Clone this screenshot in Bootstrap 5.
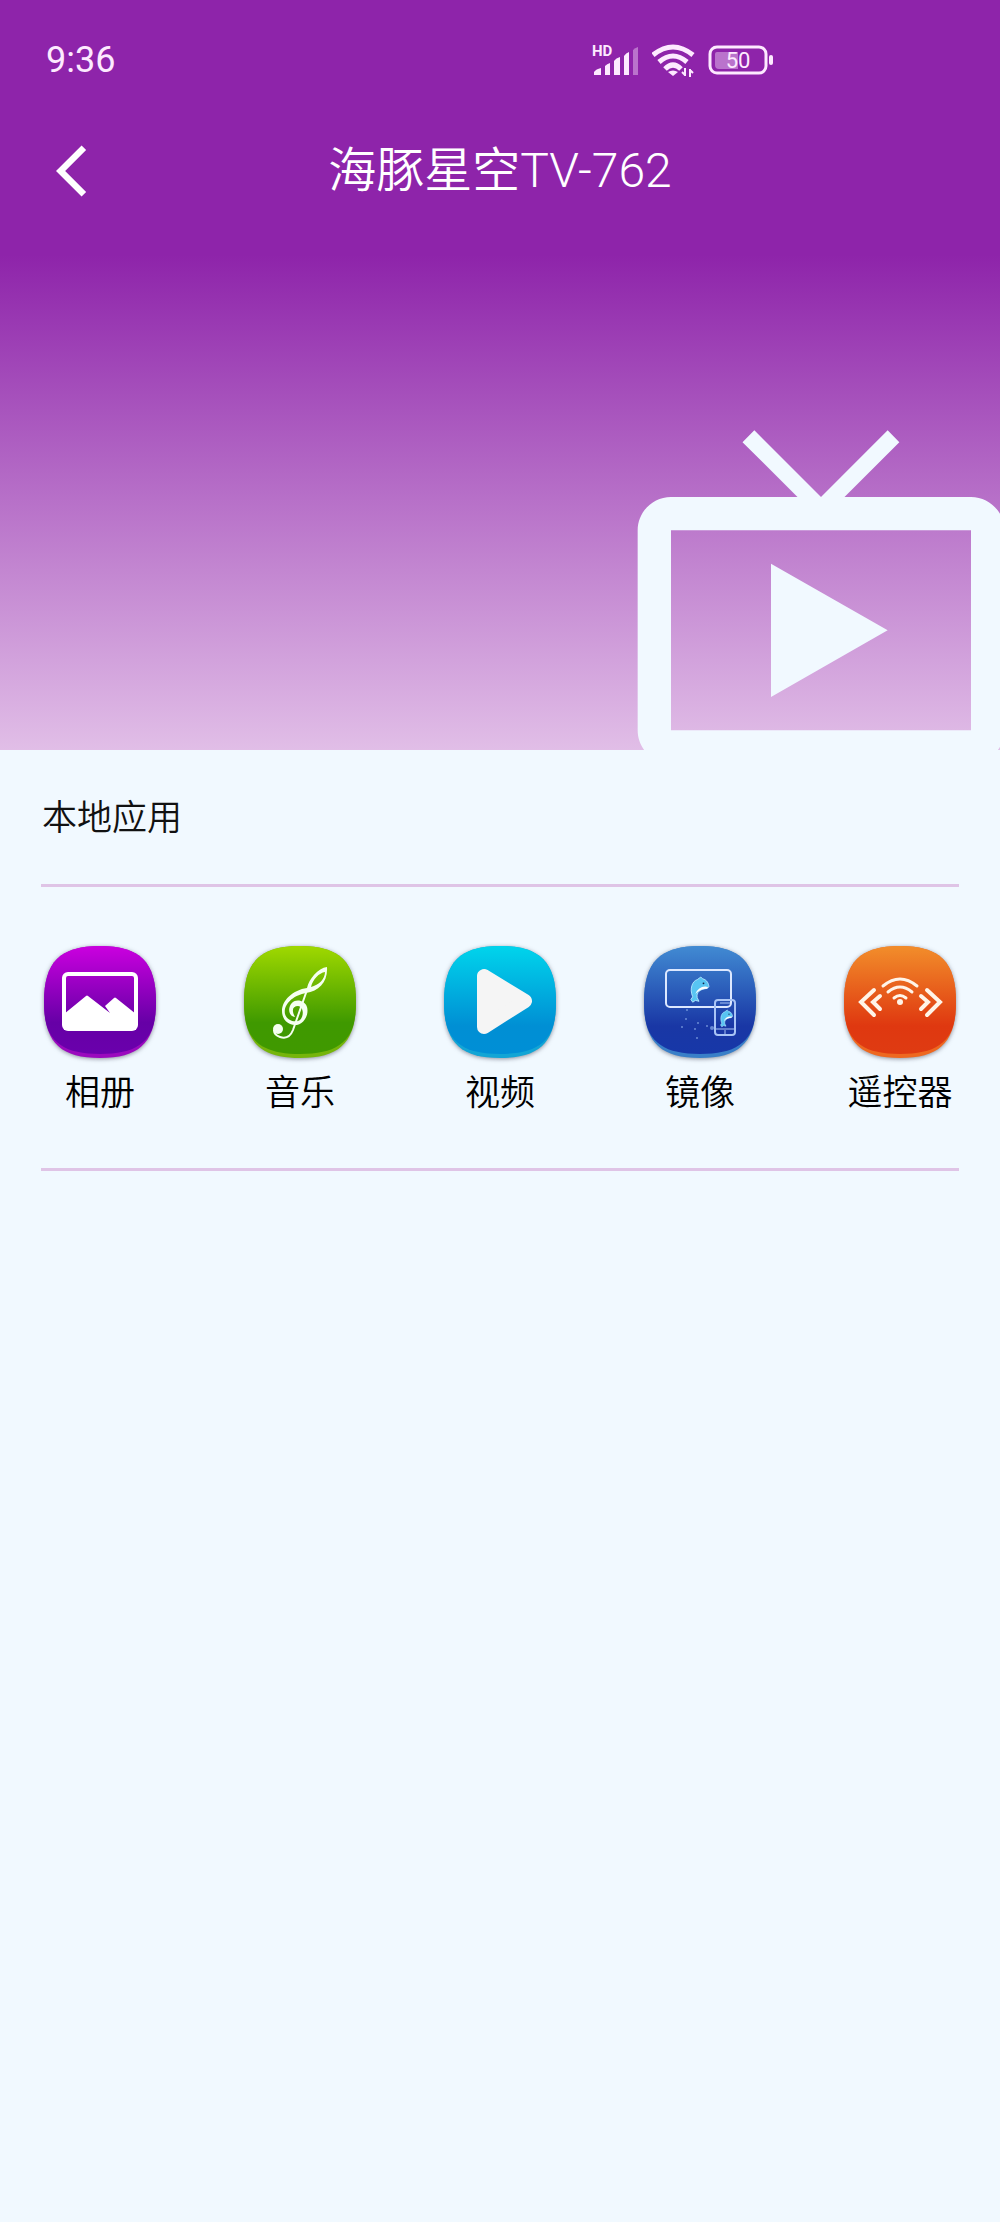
<!DOCTYPE html>
<html lang="zh-CN">
<head>
<meta charset="utf-8">
<meta name="viewport" content="width=device-width, initial-scale=1">
<title>海豚星空TV-762</title>
<link href="https://cdn.jsdelivr.net/npm/bootstrap@5.3.0/dist/css/bootstrap.min.css" rel="stylesheet">
<style>
  body { background: #f1f9ff; color: #111; font-family: Roboto, "Noto Sans CJK SC", sans-serif; font-weight: 350; }
  .hero { background: linear-gradient(#8e24aa 34%, #e1bee7); color: #fff; }
  .status-bar { height: 120px; padding: 0 46px; font-size: 36px; font-weight: 400; color: #fdeaff; }
  .status-icons { right: 226px; gap: 12px; }
  .app-bar { height: 102px; padding: 0 56px; }
  .app-title { font-size: 48px; line-height: 64px; font-weight: 350; }
  .back-btn { left: 56px; line-height: 0; }
  .hero-art { height: 528px; }
  .hero-art svg { right: -21px; bottom: -47px; }
  .section-title { font-size: 35px; line-height: 48px; font-weight: 350; padding: 45px 1px 41px; }
  .rule { border-top: 3px solid #dfc4e6; }
  .local-apps { margin: 0 41px; }
  .app-row { padding: 55px 0 49px; margin: 0 -41px; }
  .app-link { color: #000; gap: 7px; font-size: 35px; line-height: 50px; text-decoration: none; }
  .app-link svg { filter: drop-shadow(0 1px 2px rgba(40, 40, 60, .5)); }
</style>
<script defer src="https://cdn.jsdelivr.net/npm/bootstrap@5.3.0/dist/js/bootstrap.bundle.min.js"></script>
</head>
<body>
<header class="hero overflow-hidden">
  <div class="status-bar d-flex align-items-center position-relative">
    <time>9:36</time>
    <div class="status-icons d-flex align-items-center position-absolute">
      <svg width="48" height="34" viewBox="0 0 48 34" fill="#fdeaff" role="img" aria-label="HD">
        <text x="0" y="13" font-size="15" font-weight="700" font-family="Roboto, sans-serif">HD</text>
        <path d="M2 32v-3q2-3 7-4v7zM13 32V23q2-2 5-3v12zM22 32V18q2-3 6-4v18zM32 32V13q2-3 5-4v23z"/>
        <path d="M41 32V7q2-2 5-3v28z" opacity=".4"/>
      </svg>
      <svg width="44" height="34" viewBox="0 0 44 34" fill="none" stroke="#fdeaff" stroke-width="5" role="img" aria-label="Wi-Fi">
        <path d="M1 12Q21-4 41 12M7 19Q21 7 35 19M13 26Q21 18 29 26"/>
        <path d="M21 33l-5-4q5-3 10 0z" fill="#fdeaff" stroke="none"/>
        <path d="M33 25v8M33 32l-3-3M38 34v-8M38 27l3 3" stroke-width="2"/>
      </svg>
      <svg width="66" height="34" viewBox="0 0 66 34" role="img" aria-label="50%">
        <rect x="2" y="4" width="56" height="26" rx="7" fill="none" stroke="#fdeaff" stroke-width="3"/>
        <path d="M9 9h21v17H11q-4 0-4-4V11q0-2 2-2z" fill="#fdeaff" opacity=".4"/>
        <rect x="61" y="12" width="4" height="10" rx="2" fill="#fdeaff"/>
        <text x="30" y="25" text-anchor="middle" font-size="22" font-family="Roboto, sans-serif" fill="#fdeaff">50</text>
      </svg>
    </div>
  </div>
  <div class="app-bar d-flex align-items-center justify-content-center position-relative">
    <button type="button" class="back-btn btn p-0 border-0 position-absolute" aria-label="返回">
      <svg width="62" height="62" viewBox="0 0 24 24" fill="#fff"><path d="M11.67 3.87L9.9 2.1 0 12l9.9 9.9 1.77-1.77L3.54 12z"/></svg>
    </button>
    <h1 class="app-title m-0">海豚星空TV-762</h1>
  </div>
  <div class="hero-art position-relative">
    <svg class="position-absolute" width="400" height="400" viewBox="0 0 24 24" fill="#f1f9ff" aria-hidden="true"><path d="M21 6h-7.59l3.29-3.29L16 2l-4 4-4-4-.71.71L10.59 6H3c-1.1 0-2 .89-2 2v12c0 1.1.9 2 2 2h18c1.1 0 2-.9 2-2V8c0-1.11-.9-2-2-2zm0 14H3V8h18v12zM9 10v8l7-4z"/></svg>
  </div>
</header>

<main class="local-apps">
  <h2 class="section-title m-0">本地应用</h2>
  <div class="rule"></div>
  <nav class="app-row row row-cols-5 g-0 text-center" aria-label="本地应用">
    <a class="app-link col d-flex flex-column align-items-center" href="#album">
      <svg width="120" height="120" viewBox="0 0 120 120" aria-hidden="true">
        <defs>
          <linearGradient id="gAlbum" x2="0" y2="1"><stop stop-color="#d000e2"/><stop offset=".72" stop-color="#6600a6"/><stop offset="1" stop-color="#6a00ac"/></linearGradient>
          <clipPath id="tile"><path d="M60 4C100 4 116 20 116 60S100 116 60 116 4 100 4 60 20 4 60 4z"/></clipPath>
        </defs>
        <g clip-path="url(#tile)"><path fill="#9b09be" d="M0 0h120v120H0z"/><path fill="url(#gAlbum)" d="M60 0C102 0 117 16 117 57S100 112 60 112 3 98 3 57 18 0 60 0z"/></g>
        <rect x="24" y="32" width="72" height="55" rx="4" fill="none" stroke="#fff" stroke-width="4"/>
        <path d="M24 72l22-18q1-1 2 0l22 17-5-7 9-8q1-1 2 0l20 16v16H24z" fill="#fff"/>
      </svg>
      <span>相册</span>
    </a>
    <a class="app-link col d-flex flex-column align-items-center" href="#music">
      <svg width="120" height="120" viewBox="0 0 120 120" aria-hidden="true">
        <defs><linearGradient id="gMusic" x2="0" y2="1"><stop stop-color="#a5dc00"/><stop offset=".72" stop-color="#3f9900"/><stop offset="1" stop-color="#409900"/></linearGradient></defs>
        <g clip-path="url(#tile)"><path fill="#76b50b" d="M0 0h120v120H0z"/><path fill="url(#gMusic)" d="M60 0C102 0 117 16 117 57S100 112 60 112 3 98 3 57 18 0 60 0z"/></g>
        <path d="M87 25C78 26 69 37 67 46C53 48 42 58 42 69C42 78 49 84 57 83C65 81 69 72 67 65C65 58 55 56 51 62C47 68 50 75 55 75C51 68 53 64 58 64C64 65 64 74 60 78C56 81 47 79 45 72C43 62 54 53 66 51C79 49 88 40 87 25zM85 30C85 37 79 43 71 45C73 37 79 31 85 30z" fill="#f5fff0" fill-rule="evenodd"/>
        <path d="M67 48L53 88Q49 98 40 95Q34 93 34 88" fill="none" stroke="#f5fff0" stroke-width="2"/>
        <circle cx="38" cy="87" r="5" fill="#f5fff0"/>
      </svg>
      <span>音乐</span>
    </a>
    <a class="app-link col d-flex flex-column align-items-center" href="#video">
      <svg width="120" height="120" viewBox="0 0 120 120" aria-hidden="true">
        <defs><linearGradient id="gVideo" x2="0" y2="1"><stop stop-color="#00d8ed"/><stop offset=".75" stop-color="#008fd4"/><stop offset="1" stop-color="#008fd6"/></linearGradient></defs>
        <g clip-path="url(#tile)"><path fill="#12a5d5" d="M0 0h120v120H0z"/><path fill="url(#gVideo)" d="M60 0C102 0 117 16 117 57S100 112 60 112 3 98 3 57 18 0 60 0z"/></g>
        <path d="M44 34v51l41-26z" fill="#f5f5f5" stroke="#f5f5f5" stroke-width="14" stroke-linejoin="round"/>
      </svg>
      <span>视频</span>
    </a>
    <a class="app-link col d-flex flex-column align-items-center" href="#mirror">
      <svg width="120" height="120" viewBox="0 0 120 120" aria-hidden="true">
        <defs>
          <linearGradient id="gMirror" x2="0" y2="1"><stop stop-color="#438fd5"/><stop offset=".75" stop-color="#1937a5"/><stop offset="1" stop-color="#1737a8"/></linearGradient>
          <g id="dolphin">
            <path d="M3 22C-1 13 3 4 8 3L12 0L14 2C19 3 21 8 21 11C19 14 13 12 9 17Q7 20 8 23L10 27L6 26L3 28L1 25z" fill="#58c5f2" stroke="#b6e8ff"/>
            <path d="M20 11Q10 9 6 19Q11 13 19 13z" fill="#fff"/>
            <circle cx="15" cy="7" r="1" fill="#124"/>
          </g>
        </defs>
        <g clip-path="url(#tile)"><path fill="#397fc8" d="M0 0h120v120H0z"/><path fill="url(#gMirror)" d="M60 0C102 0 117 16 117 57S100 112 60 112 3 98 3 57 18 0 60 0z"/></g>
        <rect x="26" y="28" width="65" height="37" rx="4" fill="none" stroke="#dce8ff" stroke-width="2"/>
        <rect x="75" y="58" width="20" height="35" rx="3" fill="none" stroke="#a9c4f5" stroke-width="2"/>
        <path d="M80 61h10M76 87h18M85 88v4" stroke="#a9c4f5" stroke-width="1"/>
        <use href="#dolphin" transform="translate(50 35) scale(.9)"/>
        <use href="#dolphin" transform="translate(80 68) scale(.6)"/>
        <g fill="#8daee9" opacity=".7"><circle cx="47" cy="68" r="1"/><circle cx="46" cy="77" r="1"/><circle cx="58" cy="81" r="1"/><circle cx="55" cy="87" r="1"/><circle cx="42" cy="85" r="1"/><circle cx="67" cy="84" r="1"/><circle cx="72" cy="86" r="2"/><circle cx="57" cy="96" r="1"/></g>
      </svg>
      <span>镜像</span>
    </a>
    <a class="app-link col d-flex flex-column align-items-center" href="#remote">
      <svg width="120" height="120" viewBox="0 0 120 120" aria-hidden="true">
        <defs><linearGradient id="gRemote" x2="0" y2="1"><stop stop-color="#f3922c"/><stop offset=".75" stop-color="#df3810"/><stop offset="1" stop-color="#df3b12"/></linearGradient></defs>
        <g clip-path="url(#tile)"><path fill="#ee6820" d="M0 0h120v120H0z"/><path fill="url(#gRemote)" d="M60 0C102 0 117 16 117 57S100 112 60 112 3 98 3 57 18 0 60 0z"/></g>
        <g fill="none" stroke="#fff4e8" stroke-width="4" stroke-linecap="round">
          <path d="M43 44Q60 30 77 44M48 50Q60 40 72 50M54 56Q60 51 66 56" stroke-width="3"/>
          <path d="M34 48L21 60l13 13M40 54l-7 6 7 7M87 48l13 12-13 13M81 54l7 6-7 7"/>
        </g>
        <circle cx="60" cy="60" r="3" fill="#fff4e8"/>
      </svg>
      <span>遥控器</span>
    </a>
  </nav>
  <div class="rule"></div>
</main>
</body>
</html>
